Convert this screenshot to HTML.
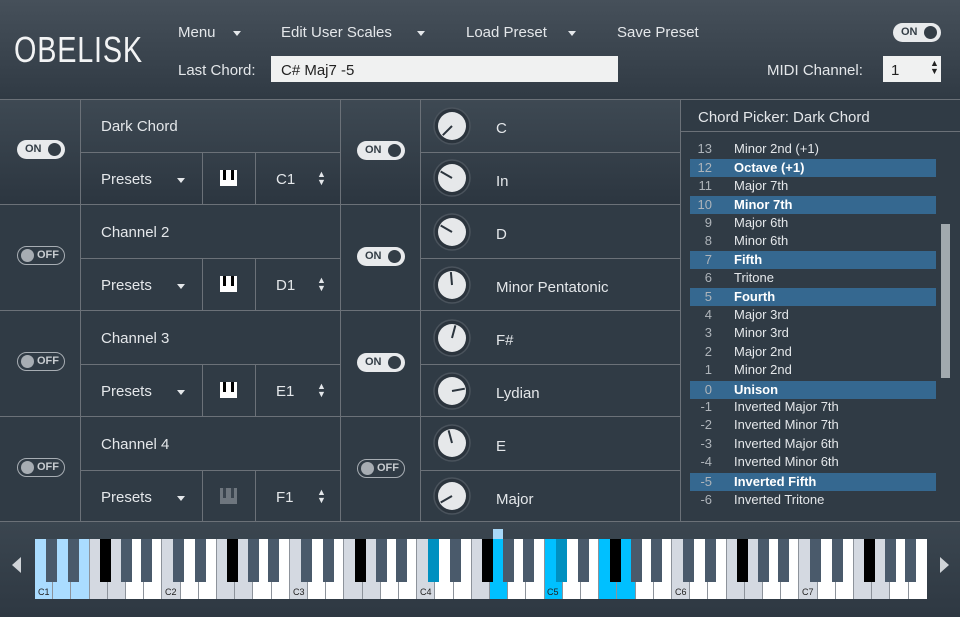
<!DOCTYPE html>
<html><head><meta charset="utf-8"><style>
*{margin:0;padding:0;box-sizing:border-box}
body{width:960px;height:617px;overflow:hidden;background:#303b45;font-family:"Liberation Sans",sans-serif;color:#e4e7ea;position:relative}
.a{position:absolute}
.hdr{left:0;top:0;width:960px;height:99px;background:linear-gradient(#46505a,#303a44)}
.t{position:absolute;font-size:15px;white-space:nowrap}
.tri{position:absolute;width:0;height:0;border-left:4.5px solid transparent;border-right:4.5px solid transparent;border-top:5px solid #e4e7ea}
.hl{position:absolute;height:1px;background:#6b7178}
.vl{position:absolute;width:1px;background:#6b7178}
.on{position:absolute;width:48px;height:19px;border-radius:10px;background:#e8eaec}
.on b{position:absolute;left:8px;top:0;line-height:19px;font-size:11px;color:#333d46;font-weight:bold}
.on i{position:absolute;right:4px;top:3px;width:13px;height:13px;border-radius:50%;background:#333d46}
.off{position:absolute;width:48px;height:19px;border-radius:10px;border:1.5px solid #a7adb3}
.off i{position:absolute;left:3px;top:2px;width:13px;height:13px;border-radius:50%;background:#a7adb3}
.off b{position:absolute;left:19px;top:0;line-height:16px;font-size:11px;color:#c8ccd0;font-weight:bold}
.knob{position:absolute;width:40px;height:40px}
.pi{position:absolute;width:17px;height:16px;background:#fff}
.pi i{position:absolute;top:0;width:3px;height:10px;background:#000}
.ud{position:absolute;font-size:9px;line-height:8px;width:8px;text-align:center}
.li{position:absolute;left:690px;width:246px;height:18px;font-size:13px;line-height:18px}
.li.h{background:#356890;font-weight:bold;color:#fff}
.li span{position:absolute;right:224px;color:#aeb4ba;font-weight:normal}
.li em{position:absolute;left:44px;font-style:normal}
.wk{position:absolute;top:539px;height:60px;width:18.2px;border-right:1px solid #8d939b;background:#fff}
.bk{position:absolute;top:539px;height:43px;width:11px;background:#4a5a6b}
.kl{position:absolute;top:587px;font-size:9px;color:#222}
</style></head><body>
<div class="a hdr"></div>
<div class="t" style="left:14px;top:29px;font-size:36px;letter-spacing:1px;font-weight:normal;color:#f2f3f4;transform:scaleX(0.8);transform-origin:left">OBELISK</div>
<div class="t" style="left:178px;top:24px">Menu</div><div class="tri" style="left:233px;top:31px"></div>
<div class="t" style="left:281px;top:24px">Edit User Scales</div><div class="tri" style="left:417px;top:31px"></div>
<div class="t" style="left:466px;top:24px">Load Preset</div><div class="tri" style="left:568px;top:31px"></div>
<div class="t" style="left:617px;top:24px">Save Preset</div>
<div class="on" style="left:893px;top:23px"><b>ON</b><i></i></div>
<div class="t" style="left:178px;top:62px">Last Chord:</div>
<div class="a" style="left:271px;top:56px;width:347px;height:26px;background:#f0f1f1"></div>
<div class="t" style="left:281px;top:62px;color:#222">C# Maj7 -5</div>
<div class="t" style="left:767px;top:62px">MIDI Channel:</div>
<div class="a" style="left:883px;top:56px;width:58px;height:26px;background:#f0f1f1"></div>
<div class="t" style="left:891px;top:62px;color:#222">1</div>
<div class="ud" style="left:930px;top:59px;color:#222">▲<br>▼</div>
<div class="hl" style="left:0;top:99px;width:960px"></div>

<div class="a" style="left:0;top:100px;width:680px;height:104px;background:linear-gradient(#3e4953,#2c3640)"></div>

<div class="vl" style="left:80px;top:100px;height:421px"></div>
<div class="vl" style="left:340px;top:100px;height:421px"></div>
<div class="vl" style="left:420px;top:100px;height:421px"></div>
<div class="vl" style="left:680px;top:100px;height:421px"></div>
<div class="hl" style="left:0;top:204px;width:680px"></div>
<div class="hl" style="left:0;top:310px;width:680px"></div>
<div class="hl" style="left:0;top:416px;width:680px"></div>
<div class="hl" style="left:0;top:521px;width:960px"></div>
<div class="hl" style="left:81px;top:152px;width:259px"></div>
<div class="hl" style="left:81px;top:258px;width:259px"></div>
<div class="hl" style="left:81px;top:364px;width:259px"></div>
<div class="hl" style="left:81px;top:470px;width:259px"></div>
<div class="hl" style="left:421px;top:152px;width:259px"></div>
<div class="hl" style="left:421px;top:258px;width:259px"></div>
<div class="hl" style="left:421px;top:364px;width:259px"></div>
<div class="hl" style="left:421px;top:470px;width:259px"></div>
<div class="vl" style="left:202px;top:153px;height:51px"></div><div class="vl" style="left:255px;top:153px;height:51px"></div>
<div class="vl" style="left:202px;top:259px;height:51px"></div><div class="vl" style="left:255px;top:259px;height:51px"></div>
<div class="vl" style="left:202px;top:365px;height:51px"></div><div class="vl" style="left:255px;top:365px;height:51px"></div>
<div class="vl" style="left:202px;top:471px;height:50px"></div><div class="vl" style="left:255px;top:471px;height:50px"></div>

<div class="on" style="left:17px;top:140px"><b>ON</b><i></i></div>
<div class="on" style="left:357px;top:141px"><b>ON</b><i></i></div>
<div class="off" style="left:17px;top:246px"><i></i><b>OFF</b></div>
<div class="on" style="left:357px;top:247px"><b>ON</b><i></i></div>
<div class="off" style="left:17px;top:352px"><i></i><b>OFF</b></div>
<div class="on" style="left:357px;top:353px"><b>ON</b><i></i></div>
<div class="off" style="left:17px;top:458px"><i></i><b>OFF</b></div>
<div class="off" style="left:357px;top:459px"><i></i><b>OFF</b></div>

<div class="t" style="left:101px;top:118px">Dark Chord</div>
<div class="t" style="left:101px;top:224px">Channel 2</div>
<div class="t" style="left:101px;top:330px">Channel 3</div>
<div class="t" style="left:101px;top:436px">Channel 4</div>

<div class="t" style="left:101px;top:171px">Presets</div><div class="tri" style="left:177px;top:178px"></div>
<div class="t" style="left:101px;top:277px">Presets</div><div class="tri" style="left:177px;top:284px"></div>
<div class="t" style="left:101px;top:383px">Presets</div><div class="tri" style="left:177px;top:390px"></div>
<div class="t" style="left:101px;top:489px">Presets</div><div class="tri" style="left:177px;top:496px"></div>

<div class="pi" style="left:220px;top:170px"><i style="left:3px"></i><i style="left:11px"></i></div>
<div class="pi" style="left:220px;top:276px"><i style="left:3px"></i><i style="left:11px"></i></div>
<div class="pi" style="left:220px;top:382px"><i style="left:3px"></i><i style="left:11px"></i></div>
<div class="pi" style="left:220px;top:488px;background:#6e767e"><i style="left:3px;background:#3a444e"></i><i style="left:11px;background:#3a444e"></i></div>

<div class="t" style="left:276px;top:171px">C1</div><div class="ud" style="left:317px;top:170px">▲<br>▼</div>
<div class="t" style="left:276px;top:277px">D1</div><div class="ud" style="left:317px;top:276px">▲<br>▼</div>
<div class="t" style="left:276px;top:383px">E1</div><div class="ud" style="left:317px;top:382px">▲<br>▼</div>
<div class="t" style="left:276px;top:489px">F1</div><div class="ud" style="left:317px;top:488px">▲<br>▼</div>

<svg class="knob" style="left:432px;top:106px" viewBox="0 0 40 40"><circle cx="20" cy="20" r="18" fill="#2b343d" stroke="#4a535c" stroke-width="1.5"/><circle cx="20" cy="20" r="14" fill="#e6e8ea"/><line x1="20" y1="20" x2="10.8" y2="29.2" stroke="#2b343d" stroke-width="2"/></svg>
<svg class="knob" style="left:432px;top:158px" viewBox="0 0 40 40"><circle cx="20" cy="20" r="18" fill="#2b343d" stroke="#4a535c" stroke-width="1.5"/><circle cx="20" cy="20" r="14" fill="#e6e8ea"/><line x1="20" y1="20" x2="8.7" y2="13.5" stroke="#2b343d" stroke-width="2"/></svg>
<svg class="knob" style="left:432px;top:212px" viewBox="0 0 40 40"><circle cx="20" cy="20" r="18" fill="#2b343d" stroke="#4a535c" stroke-width="1.5"/><circle cx="20" cy="20" r="14" fill="#e6e8ea"/><line x1="20" y1="20" x2="8.7" y2="13.5" stroke="#2b343d" stroke-width="2"/></svg>
<svg class="knob" style="left:432px;top:265px" viewBox="0 0 40 40"><circle cx="20" cy="20" r="18" fill="#2b343d" stroke="#4a535c" stroke-width="1.5"/><circle cx="20" cy="20" r="14" fill="#e6e8ea"/><line x1="20" y1="20" x2="18.9" y2="7.1" stroke="#2b343d" stroke-width="2"/></svg>
<svg class="knob" style="left:432px;top:318px" viewBox="0 0 40 40"><circle cx="20" cy="20" r="18" fill="#2b343d" stroke="#4a535c" stroke-width="1.5"/><circle cx="20" cy="20" r="14" fill="#e6e8ea"/><line x1="20" y1="20" x2="23.4" y2="7.4" stroke="#2b343d" stroke-width="2"/></svg>
<svg class="knob" style="left:432px;top:371px" viewBox="0 0 40 40"><circle cx="20" cy="20" r="18" fill="#2b343d" stroke="#4a535c" stroke-width="1.5"/><circle cx="20" cy="20" r="14" fill="#e6e8ea"/><line x1="20" y1="20" x2="32.8" y2="17.7" stroke="#2b343d" stroke-width="2"/></svg>
<svg class="knob" style="left:432px;top:423px" viewBox="0 0 40 40"><circle cx="20" cy="20" r="18" fill="#2b343d" stroke="#4a535c" stroke-width="1.5"/><circle cx="20" cy="20" r="14" fill="#e6e8ea"/><line x1="20" y1="20" x2="16.6" y2="7.4" stroke="#2b343d" stroke-width="2"/></svg>
<svg class="knob" style="left:432px;top:476px" viewBox="0 0 40 40"><circle cx="20" cy="20" r="18" fill="#2b343d" stroke="#4a535c" stroke-width="1.5"/><circle cx="20" cy="20" r="14" fill="#e6e8ea"/><line x1="20" y1="20" x2="8.7" y2="26.5" stroke="#2b343d" stroke-width="2"/></svg>

<div class="t" style="left:496px;top:120px">C</div>
<div class="t" style="left:496px;top:173px">In</div>
<div class="t" style="left:496px;top:226px">D</div>
<div class="t" style="left:496px;top:279px">Minor Pentatonic</div>
<div class="t" style="left:496px;top:332px">F#</div>
<div class="t" style="left:496px;top:385px">Lydian</div>
<div class="t" style="left:496px;top:438px">E</div>
<div class="t" style="left:496px;top:491px">Major</div>

<div class="t" style="left:698px;top:109px">Chord Picker: Dark Chord</div>
<div class="hl" style="left:681px;top:131px;width:279px;background:#6b7178"></div>
<div class="a" style="left:941px;top:224px;width:9px;height:154px;background:#a1a9ae"></div>
<div class="li" style="top:140px"><span>13</span><em>Minor 2nd (+1)</em></div>
<div class="li h" style="top:159px"><span>12</span><em>Octave (+1)</em></div>
<div class="li" style="top:177px"><span>11</span><em>Major 7th</em></div>
<div class="li h" style="top:196px"><span>10</span><em>Minor 7th</em></div>
<div class="li" style="top:214px"><span>9</span><em>Major 6th</em></div>
<div class="li" style="top:232px"><span>8</span><em>Minor 6th</em></div>
<div class="li h" style="top:251px"><span>7</span><em>Fifth</em></div>
<div class="li" style="top:269px"><span>6</span><em>Tritone</em></div>
<div class="li h" style="top:288px"><span>5</span><em>Fourth</em></div>
<div class="li" style="top:306px"><span>4</span><em>Major 3rd</em></div>
<div class="li" style="top:324px"><span>3</span><em>Minor 3rd</em></div>
<div class="li" style="top:343px"><span>2</span><em>Major 2nd</em></div>
<div class="li" style="top:361px"><span>1</span><em>Minor 2nd</em></div>
<div class="li h" style="top:381px"><span>0</span><em>Unison</em></div>
<div class="li" style="top:398px"><span>-1</span><em>Inverted Major 7th</em></div>
<div class="li" style="top:416px"><span>-2</span><em>Inverted Minor 7th</em></div>
<div class="li" style="top:435px"><span>-3</span><em>Inverted Major 6th</em></div>
<div class="li" style="top:453px"><span>-4</span><em>Inverted Minor 6th</em></div>
<div class="li h" style="top:473px"><span>-5</span><em>Inverted Fifth</em></div>
<div class="li" style="top:491px"><span>-6</span><em>Inverted Tritone</em></div>

<div class="a" style="left:0;top:522px;width:960px;height:95px;background:linear-gradient(#3b4650,#2e3842)"></div>
<div class="a" style="left:12px;top:557px;width:0;height:0;border-top:8px solid transparent;border-bottom:8px solid transparent;border-right:9px solid #d0d4d8"></div>
<div class="a" style="left:940px;top:557px;width:0;height:0;border-top:8px solid transparent;border-bottom:8px solid transparent;border-left:9px solid #d0d4d8"></div>
<div class="a" style="left:493px;top:529px;width:10px;height:10px;background:#a8d8f8"></div>

<div class="wk" style="left:35px;background:#aadcff"></div><div class="wk" style="left:53.2px;background:#aadcff"></div><div class="wk" style="left:71.4px;background:#aadcff"></div><div class="wk" style="left:89.6px;background:#d4d9e1"></div><div class="wk" style="left:107.8px;background:#d4d9e1"></div><div class="wk" style="left:126px"></div><div class="wk" style="left:144.2px"></div>
<div class="wk" style="left:162.4px;background:#d4d9e1"></div><div class="wk" style="left:180.6px"></div><div class="wk" style="left:198.8px"></div><div class="wk" style="left:217px;background:#d4d9e1"></div><div class="wk" style="left:235.2px;background:#d4d9e1"></div><div class="wk" style="left:253.4px"></div><div class="wk" style="left:271.6px"></div>
<div class="wk" style="left:289.8px;background:#d4d9e1"></div><div class="wk" style="left:308px"></div><div class="wk" style="left:326.2px"></div><div class="wk" style="left:344.4px;background:#d4d9e1"></div><div class="wk" style="left:362.6px;background:#d4d9e1"></div><div class="wk" style="left:380.8px"></div><div class="wk" style="left:399px"></div>
<div class="wk" style="left:417.2px;background:#d4d9e1"></div><div class="wk" style="left:435.4px"></div><div class="wk" style="left:453.6px"></div><div class="wk" style="left:471.8px;background:#d4d9e1"></div><div class="wk" style="left:490px;background:#00c0ff"></div><div class="wk" style="left:508.2px"></div><div class="wk" style="left:526.4px"></div>
<div class="wk" style="left:544.6px;background:#00c0ff"></div><div class="wk" style="left:562.8px"></div><div class="wk" style="left:581px"></div><div class="wk" style="left:599.2px;background:#00c0ff"></div><div class="wk" style="left:617.4px;background:#00c0ff"></div><div class="wk" style="left:635.6px"></div><div class="wk" style="left:653.8px"></div>
<div class="wk" style="left:672px;background:#d4d9e1"></div><div class="wk" style="left:690.2px"></div><div class="wk" style="left:708.4px"></div><div class="wk" style="left:726.6px;background:#d4d9e1"></div><div class="wk" style="left:744.8px;background:#d4d9e1"></div><div class="wk" style="left:763px"></div><div class="wk" style="left:781.2px"></div>
<div class="wk" style="left:799.4px;background:#d4d9e1"></div><div class="wk" style="left:817.6px"></div><div class="wk" style="left:835.8px"></div><div class="wk" style="left:854px;background:#d4d9e1"></div><div class="wk" style="left:872.2px;background:#d4d9e1"></div><div class="wk" style="left:890.4px"></div><div class="wk" style="left:908.6px;border-right:none"></div>

<div class="bk" style="left:46px"></div><div class="bk" style="left:68px"></div><div class="bk" style="left:100px;background:#000"></div><div class="bk" style="left:121px"></div><div class="bk" style="left:141px"></div>
<div class="bk" style="left:173.4px"></div><div class="bk" style="left:195.4px"></div><div class="bk" style="left:227.4px;background:#000"></div><div class="bk" style="left:248.4px"></div><div class="bk" style="left:268.4px"></div>
<div class="bk" style="left:300.8px"></div><div class="bk" style="left:322.8px"></div><div class="bk" style="left:354.8px;background:#000"></div><div class="bk" style="left:375.8px"></div><div class="bk" style="left:395.8px"></div>
<div class="bk" style="left:428.2px;background:#0090c0"></div><div class="bk" style="left:450.2px"></div><div class="bk" style="left:482.2px;background:#000"></div><div class="bk" style="left:503.2px"></div><div class="bk" style="left:523.2px"></div>
<div class="bk" style="left:555.6px;background:#0090c0"></div><div class="bk" style="left:577.6px"></div><div class="bk" style="left:609.6px;background:#000"></div><div class="bk" style="left:630.6px"></div><div class="bk" style="left:650.6px"></div>
<div class="bk" style="left:683px"></div><div class="bk" style="left:705px"></div><div class="bk" style="left:737px;background:#000"></div><div class="bk" style="left:758px"></div><div class="bk" style="left:778px"></div>
<div class="bk" style="left:810.4px"></div><div class="bk" style="left:832.4px"></div><div class="bk" style="left:864.4px;background:#000"></div><div class="bk" style="left:885.4px"></div><div class="bk" style="left:905.4px"></div>

<div class="kl" style="left:38px">C1</div><div class="kl" style="left:165px">C2</div><div class="kl" style="left:293px">C3</div><div class="kl" style="left:420px">C4</div><div class="kl" style="left:547px">C5</div><div class="kl" style="left:675px">C6</div><div class="kl" style="left:802px">C7</div>
</body></html>
